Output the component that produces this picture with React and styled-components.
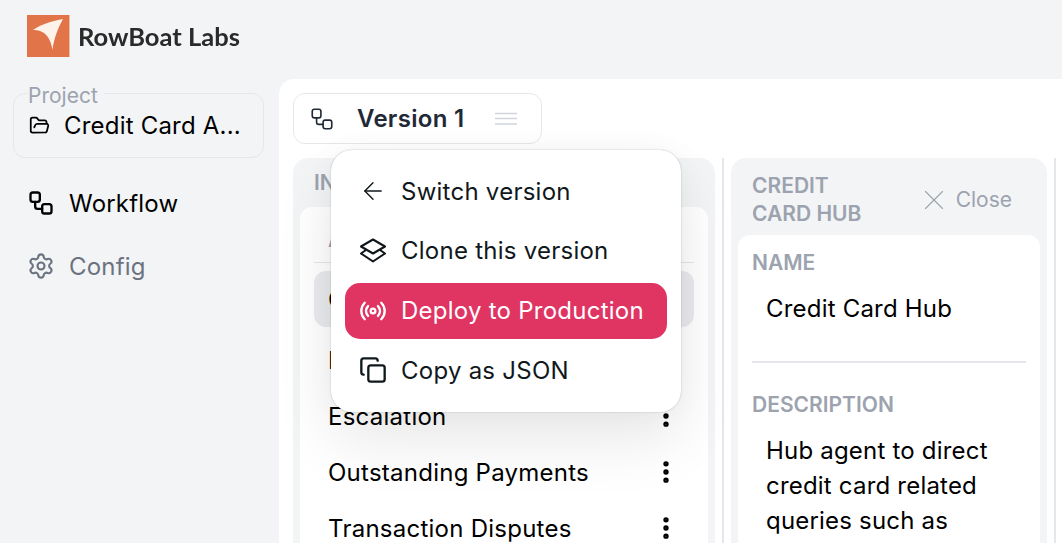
import React from "react";
import styled, { createGlobalStyle } from "styled-components";
import { Workflow, Settings, FolderOpen, ArrowLeft, Radio, Copy, X, EllipsisVertical } from "lucide-react";

const GlobalStyle = createGlobalStyle`
  html, body {
    margin: 0;
    height: 100%;
    overflow: hidden;
    background: #f3f4f6;
    font-family: Inter, "Liberation Sans", sans-serif;
  }
  * { box-sizing: border-box; }
`;

const Page = styled.div`
  width: 1062px;
  height: 543px;
  overflow: hidden;
  display: flex;
  flex-direction: column;
  background: #f3f4f6;
`;

const TopBar = styled.header`
  height: 79px;
  flex: none;
  display: flex;
  align-items: flex-start;
  padding: 15px 0 0 27px;
`;

const LogoImage = styled.svg`
  filter: blur(0.4px);
`;

const LogoText = styled.span`
  font-family: Lato, sans-serif;
  font-weight: 700;
  font-size: 25.5px;
  line-height: 42px;
  margin-left: 8px;
  color: #2a2a2a;
  filter: blur(0.5px);
`;

const Body = styled.div`
  flex: 1;
  display: flex;
  min-height: 0;
`;

const Sidebar = styled.aside`
  width: 279px;
  flex: none;
  padding: 14px 15px 0 13px;
`;

const ProjectBox = styled.div`
  position: relative;
  height: 65px;
  border: 1px solid #e5e7eb;
  border-radius: 12px;
  padding: 0 0 0 15px;
  display: flex;
  align-items: center;
  gap: 14px;
  font-size: 24px;
  letter-spacing: 0.2px;
  color: #000;
`;

const ProjectLabel = styled.span`
  position: absolute;
  left: 14px;
  top: -11px;
  font-size: 21px;
  line-height: 26px;
  letter-spacing: 0;
  color: #9ca3af;
  background: #f3f4f6;
  padding-right: 6px;
`;

const NavList = styled.nav`
  display: flex;
  flex-direction: column;
  gap: 27px;
  margin-top: 27px;
  padding-left: 14px;
`;

const NavItem = styled.div`
  display: flex;
  align-items: center;
  gap: 14px;
  height: 36px;
  font-size: 24px;
  letter-spacing: 0.2px;
  color: ${({ $muted }) => ($muted ? "#6b7280" : "#000")};
`;

const Main = styled.main`
  flex: 1;
  min-width: 0;
  background: #fff;
  border-top-left-radius: 15px;
  padding: 14px 0 0 14px;
  display: flex;
  flex-direction: column;
  overflow: hidden;
`;

const VersionBar = styled.div`
  position: relative;
  flex: none;
  width: 249px;
  height: 51px;
  border: 1px solid #e5e7eb;
  border-radius: 12px;
  display: flex;
  align-items: center;
  padding: 0 24px 0 15px;
  color: #1f2937;
`;

const VersionName = styled.span`
  font-size: 24px;
  font-weight: 600;
  letter-spacing: 0.3px;
  margin-left: 22px;
  flex: 1;
`;

const Menu = styled.div`
  position: absolute;
  z-index: 10;
  left: 37px;
  top: 56px;
  width: 350px;
  height: 262px;
  background: #fff;
  border-radius: 21px;
  padding: 13px 14px;
  display: flex;
  flex-direction: column;
  gap: 3.8px;
  box-shadow: 0 0 30px rgba(0, 0, 0, 0.04), 0 30px 60px rgba(0, 0, 0, 0.09), 0 0 1.5px rgba(0, 0, 0, 0.3);
`;

const MenuItem = styled.div`
  height: 56px;
  flex: none;
  display: flex;
  align-items: center;
  gap: 14px;
  padding: 0 14px;
  border-radius: 15px;
  font-size: 24px;
  letter-spacing: 0.25px;
  color: ${({ $active }) => ($active ? "#fff" : "#11181c")};
  background: ${({ $active }) => ($active ? "#e03463" : "transparent")};
`;

const Columns = styled.div`
  flex: 1;
  display: flex;
  gap: 7px;
  margin-top: 14px;
  min-height: 0;
`;

const Panel = styled.section`
  flex: none;
  width: ${({ $width }) => $width}px;
  background: #f3f4f6;
  border-radius: 15px 15px 0 0;
  padding: 0 7px;
  display: flex;
  flex-direction: column;
`;

const Divider = styled.div`
  flex: none;
  width: 2px;
  background: #e5e7eb;
`;

const PanelHeader = styled.div`
  height: 49px;
  flex: none;
  display: flex;
  align-items: center;
  padding-left: 14px;
  font-size: 21px;
  font-weight: 600;
  color: #9ca3af;
  line-height: 28px;
`;

const DetailHeader = styled(PanelHeader)`
  height: 77px;
  justify-content: space-between;
  padding: 7px 28px 0 14px;
`;

const HeaderTitle = styled.div`
  width: 130px;
`;

const CloseAction = styled.div`
  display: flex;
  align-items: center;
  gap: 5px;
  font-weight: 400;
  font-size: 21px;
`;

const PanelCard = styled.div`
  flex: 1;
  background: #fff;
  border-radius: 12px 12px 0 0;
  padding: ${({ $pad }) => $pad};
  overflow: hidden;
`;

const CardHeading = styled.div`
  height: 47px;
  display: flex;
  align-items: center;
  padding-left: 14px;
  border-bottom: 1px solid #e5e7eb;
  font-size: 21px;
  font-weight: 600;
  color: #9ca3af;
`;

const AgentRow = styled.div`
  height: 56px;
  margin-top: ${({ $top }) => $top || 0}px;
  display: flex;
  align-items: center;
  justify-content: space-between;
  padding: 0 14px;
  border-radius: 12px;
  font-size: 24px;
  letter-spacing: 0.25px;
  color: #000;
  background: ${({ $selected }) => ($selected ? "#eaebee" : "transparent")};
`;

const FieldLabel = styled.div`
  font-size: 21px;
  font-weight: 600;
  line-height: 28px;
  color: #9ca3af;
`;

const FieldValue = styled.div`
  font-size: 24px;
  line-height: 35px;
  letter-spacing: 0.2px;
  color: #000;
  padding: 0 14px;
  margin-top: ${({ $top }) => $top}px;
`;

const Rule = styled.hr`
  border: 0;
  height: 2px;
  background: #e5e7eb;
  margin: 35px 0 28px;
`;

const LogoMark = () => (
  <LogoImage width="43" height="42" viewBox="0 0 43 42">
    <rect width="42" height="42" fill="#e2744a" />
    <rect x="42" width="1" height="42" fill="#f0b9a2" />
    <path d="M6 15 C14 9 26 6 36 4 C31 13 27 23 25.5 35 C24 24 18 14 6 15Z" fill="#fdf3ea" />
  </LogoImage>
);

const LayersIcon = () => (
  <svg width="28" height="28" viewBox="0 0 28 28" fill="none" stroke="currentColor" strokeWidth="2.1" strokeLinejoin="round">
    <path d="M14 2.5 L26 9.5 L14 16.5 L2 9.5Z" />
    <path d="M7 13 L2 16.5 L14 24.5 L26 16.5 L21 13" />
  </svg>
);

const MenuLines = () => (
  <svg width="22" height="14" viewBox="0 0 22 14" stroke="#d1d5db" strokeWidth="1.5">
    <path d="M0 1.5H22M0 6.5H22M0 12H22" />
  </svg>
);

const agents = [
  { name: "Credit Card Hub", selected: true, top: 8 },
  { name: "Balance", top: 5 },
  { name: "Escalation" },
  { name: "Outstanding Payments" },
  { name: "Transaction Disputes" },
];

export default function App() {
  return (
    <Page>
      <GlobalStyle />
      <TopBar>
        <LogoMark />
        <LogoText>RowBoat Labs</LogoText>
      </TopBar>
      <Body>
        <Sidebar>
          <ProjectBox>
            <ProjectLabel>Project</ProjectLabel>
            <FolderOpen size={21} strokeWidth={2} />
            <span>Credit Card A...</span>
          </ProjectBox>
          <NavList>
            <NavItem>
              <Workflow size={28} strokeWidth={2} />
              Workflow
            </NavItem>
            <NavItem $muted>
              <Settings size={28} strokeWidth={1.8} />
              Config
            </NavItem>
          </NavList>
        </Sidebar>
        <Main>
          <VersionBar>
            <Workflow size={26} strokeWidth={1.5} />
            <VersionName>Version 1</VersionName>
            <MenuLines />
            <Menu>
              <MenuItem>
                <ArrowLeft size={28} strokeWidth={1.2} />
                Switch version
              </MenuItem>
              <MenuItem>
                <LayersIcon />
                Clone this version
              </MenuItem>
              <MenuItem $active>
                <Radio size={28} strokeWidth={2} />
                Deploy to Production
              </MenuItem>
              <MenuItem>
                <Copy size={28} strokeWidth={2} />
                Copy as JSON
              </MenuItem>
            </Menu>
          </VersionBar>
          <Columns>
            <Panel $width={422}>
              <PanelHeader>INSTRUCTIONS</PanelHeader>
              <PanelCard $pad="9px 14px 0">
                <CardHeading>AGENTS</CardHeading>
                {agents.map((agent) => (
                  <AgentRow key={agent.name} $selected={agent.selected} $top={agent.top}>
                    {agent.name}
                    <EllipsisVertical size={28} strokeWidth={2.6} />
                  </AgentRow>
                ))}
              </PanelCard>
            </Panel>
            <Divider />
            <Panel $width={316}>
              <DetailHeader>
                <HeaderTitle>CREDIT CARD HUB</HeaderTitle>
                <CloseAction>
                  <X size={34} strokeWidth={0.8} />
                  Close
                </CloseAction>
              </DetailHeader>
              <PanelCard $pad="14px 14px 0">
                <FieldLabel>NAME</FieldLabel>
                <FieldValue $top={14}>Credit Card Hub</FieldValue>
                <Rule />
                <FieldLabel>DESCRIPTION</FieldLabel>
                <FieldValue $top={14}>
                  Hub agent to direct credit card related queries such as
                </FieldValue>
              </PanelCard>
            </Panel>
            <Divider />
          </Columns>
        </Main>
      </Body>
    </Page>
  );
}
